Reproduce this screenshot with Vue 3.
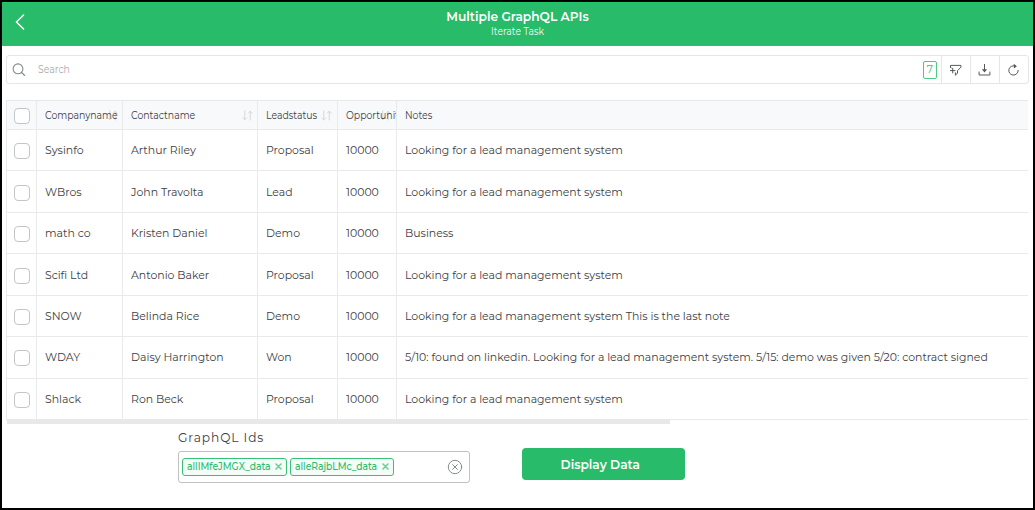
<script setup>
const columns = [
  { label: 'Companyname', sort: true, key: 'company' },
  { label: 'Contactname', sort: true, key: 'contact' },
  { label: 'Leadstatus', sort: true, key: 'status' },
  { label: 'Opportunity', sort: true, key: 'amount' },
  { label: 'Notes', sort: false, key: 'notes' },
]
const rows = [
  { company: 'Sysinfo', contact: 'Arthur Riley', status: 'Proposal', amount: '10000', notes: 'Looking for a lead management system' },
  { company: 'WBros', contact: 'John Travolta', status: 'Lead', amount: '10000', notes: 'Looking for a lead management system' },
  { company: 'math co', contact: 'Kristen Daniel', status: 'Demo', amount: '10000', notes: 'Business' },
  { company: 'Scifi Ltd', contact: 'Antonio Baker', status: 'Proposal', amount: '10000', notes: 'Looking for a lead management system' },
  { company: 'SNOW', contact: 'Belinda Rice', status: 'Demo', amount: '10000', notes: 'Looking for a lead management system This is the last note' },
  { company: 'WDAY', contact: 'Daisy Harrington', status: 'Won', amount: '10000', notes: '5/10: found on linkedin. Looking for a lead management system. 5/15: demo was given 5/20: contract signed' },
  { company: 'Shlack', contact: 'Ron Beck', status: 'Proposal', amount: '10000', notes: 'Looking for a lead management system' },
]
const tags = ['allIMfeJMGX_data', 'alleRajbLMc_data']
</script>

<template>
  <div class="screen">
    <header class="topbar">
      <svg class="back" width="12" height="18" viewBox="0 0 12 18"><path d="M9.6 2 2.4 9l7.2 7" /></svg>
      <div class="title">Multiple GraphQL APIs</div>
      <div class="subtitle">Iterate Task</div>
    </header>

    <div class="search">
      <svg class="lens" width="14" height="14" viewBox="0 0 14 14"><circle cx="6" cy="5.8" r="4.9" /><path d="m9.6 9.5 3.1 3" /></svg>
      <span class="placeholder">Search</span>
      <span class="count">7</span>
      <span class="tool">
        <svg width="14" height="14" viewBox="0 0 14 14"><path d="M1.5 4.2V2.4h10.4v1.8L8.5 7.7v2.4l-2.1 2.2V9.8M1.5 4.2l1 1M1.4 7.6H6M3.7 5.3v4.6" /></svg>
      </span>
      <span class="tool">
        <svg width="14" height="14" viewBox="0 0 14 14"><path d="M1.1 9v3h10.8V9M6.5 1.4v7" /><path class="solid" d="M3.9 6.3h5.2L6.5 9.6z" /></svg>
      </span>
      <span class="tool">
        <svg width="14" height="14" viewBox="0 0 14 14"><path d="M8.1 3a4.7 4.7 0 1 0 3.1 4.4" /><path class="solid" d="m6.7.8 3.2 2.4-3 2.2z" /></svg>
      </span>
    </div>

    <div class="table">
      <div class="row head">
        <div class="cell check"><i class="box"></i></div>
        <div v-for="c in columns" :key="c.key" class="cell" :class="c.key">
          <svg v-if="c.sort" class="sort" width="11" height="11" viewBox="0 0 11 11"><path d="M2.8.8v9M.8 7.8l2 2 2-2M8.2 10V1.2M6.2 3.2l2-2 2 2" /></svg>
          <span>{{ c.label }}</span>
        </div>
      </div>
      <div v-for="r in rows" :key="r.company" class="row">
        <div class="cell check"><i class="box"></i></div>
        <div v-for="c in columns" :key="c.key" class="cell" :class="c.key"><span>{{ r[c.key] }}</span></div>
      </div>
    </div>
    <div class="scrollbar"></div>

    <div class="form">
      <div class="field">
        <label>GraphQL Ids</label>
        <div class="select">
          <span v-for="t in tags" :key="t" class="tag">
            <span class="tag-text">{{ t }}</span>
            <svg width="7" height="7" viewBox="0 0 7 7"><path d="m1 1 5 5M6 1 1 6" /></svg>
          </span>
          <svg class="clear" width="16" height="16" viewBox="0 0 16 16"><circle cx="8" cy="8" r="6.7" /><path d="m5.6 5.6 4.8 4.8M10.4 5.6l-4.8 4.8" /></svg>
        </div>
      </div>
      <button><span>Display Data</span></button>
    </div>
  </div>
</template>

<style>
body { background: #fff; }
</style>

<style scoped>
.screen {
  box-sizing: border-box;
  width: 1035px;
  height: 510px;
  border: 2px solid #000;
  background: #fff;
  font-family: Montserrat, Inter, "Open Sans", sans-serif;
  color: #3c4044;
  overflow: hidden;
}
svg { fill: none; stroke-linecap: round; stroke-linejoin: round; display: block; flex: none; }
.topbar {
  position: relative;
  height: 44px;
  box-sizing: border-box;
  padding-top: 5px;
  background: #28bb69;
  border-top: 1px solid #1ec866;
  border-bottom: 1px solid #1ec866;
  color: #fff;
  text-align: center;
}
.back { position: absolute; left: 12px; top: 10px; stroke: #fff; stroke-width: 1.5; }
.title { font-size: 13px; line-height: 16px; font-weight: 600; transform: scaleX(0.94); }
.subtitle { font-size: 10.4px; line-height: 15px; transform: scaleX(0.89); color: #f0fbf5; }
.search {
  display: flex;
  align-items: center;
  height: 29px;
  box-sizing: border-box;
  margin: 9px 4.5px 0 4px;
  border: 1px solid #e6e6e6;
  border-radius: 3px;
}
.lens { margin-left: 5px; stroke: #84898e; stroke-width: 1.1; }
.placeholder { flex: 1; margin-left: 12px; font-size: 10.4px; transform: scaleX(0.9); transform-origin: 0 50%; color: #a9abad; }
.count {
  width: 14px;
  height: 18px;
  box-sizing: border-box;
  margin-right: 3.6px;
  border: 1px solid #4cc983;
  border-radius: 2px;
  color: #36bf73;
  font-size: 10.5px;
  line-height: 16px;
  text-align: center;
}
.tool {
  display: flex;
  align-items: center;
  justify-content: center;
  width: 29px;
  height: 27px;
  box-sizing: border-box;
  border-left: 1px solid #e6e6e6;
}
.tool svg { stroke: #54585c; stroke-width: 1; }
.tool .solid { fill: #54585c; stroke: none; }
.table { margin: 16px 5px 0 4px; border-left: 1px solid #e9eaeb; border-top: 1px solid #e5e7e8; }
.row {
  display: grid;
  grid-template-columns: 30px 86.4px 134.9px 79.7px 59px 1fr;
  height: 41.45px;
  box-sizing: border-box;
  border-bottom: 1px solid #e8e9ea;
}
.head { height: 29px; background: #f8f9fb; }
.cell {
  position: relative;
  display: flex;
  align-items: center;
  box-sizing: border-box;
  padding-left: 8px;
  border-right: 1px solid #e9eaeb;
  overflow: hidden;
  white-space: nowrap;
  font-size: 11.8px;
}
.cell:last-child { border-right: 0; }
.cell span { position: relative; left: -0.3px; transform: scaleX(0.925); transform-origin: 0 50%; }
.head .cell { font-size: 10.5px; }
.head .cell span { transform: scaleX(0.89); }
.check { padding-left: 7px; }
.box { width: 16px; height: 16px; box-sizing: border-box; border: 1px solid #c3c5c7; border-radius: 4px; background: #fff; margin-top: 2px; }
.sort { position: absolute; right: 4.5px; top: 9px; stroke: #d5d7da; stroke-width: 1; }
.scrollbar { width: 663px; height: 4px; margin-left: 5px; background: #e8e8e8; }
.form { display: flex; align-items: flex-start; margin-left: 176px; }
.field { width: 292px; }
label { display: block; margin-top: 4px; height: 22.5px; font-size: 13.2px; line-height: 19px; letter-spacing: 1px; transform: scaleX(0.925); transform-origin: 0 50%; }
.select {
  display: flex;
  align-items: center;
  gap: 3px;
  height: 32px;
  box-sizing: border-box;
  padding: 0 6.5px 0 3px;
  border: 1px solid #bfc1c3;
  border-radius: 3px;
}
.tag {
  display: flex;
  align-items: center;
  justify-content: space-between;
  width: 104.6px;
  height: 18px;
  box-sizing: border-box;
  padding: 0 4px;
  border: 1px solid #36c174;
  border-radius: 3px;
  background: #f3fcf7;
  color: #28bb69;
  font-size: 10.4px;
  font-weight: 500;
  white-space: nowrap;
}
.tag-text { width: 85px; transform: scaleX(0.885); transform-origin: 0 50%; }
.tag svg { stroke: #69cf96; stroke-width: 1.5; }
.clear { margin-left: auto; stroke: #878c91; stroke-width: 1; }
button {
  width: 163px;
  height: 32px;
  margin: 23.5px 0 0 52px;
  padding: 0 7px 0 0;
  border: 0;
  border-radius: 4px;
  background: #28bb69;
  color: #fff;
  font: 600 13px Montserrat, Inter, "Open Sans", sans-serif;
}
button span { display: inline-block; transform: scaleX(0.94); }
</style>
